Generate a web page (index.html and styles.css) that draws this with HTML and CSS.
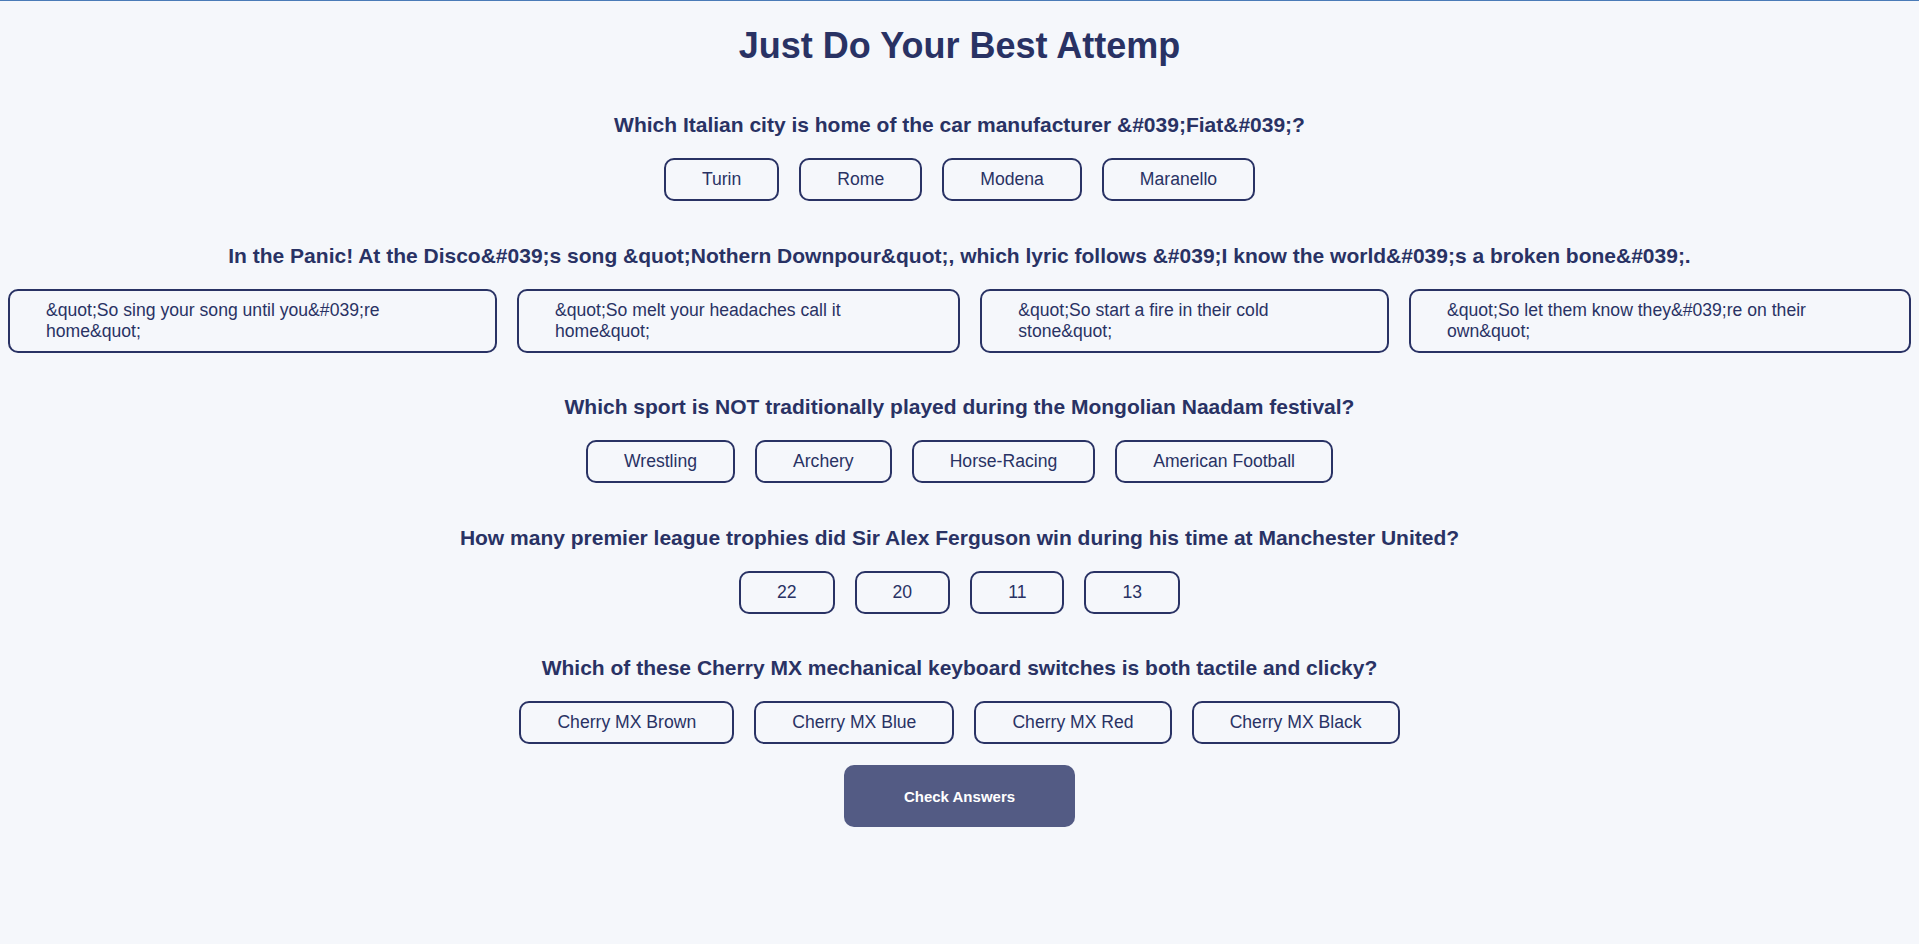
FILE: index.html
```html
<!DOCTYPE html>
<html lang="en">
<head>
<meta charset="utf-8">
<title>Quiz</title>
<link rel="stylesheet" href="styles.css">
</head>
<body>
<main class="quiz">
  <h1 class="quiz-title">Just Do Your Best Attemp</h1>

  <section class="question">
    <h2 class="question-text">Which Italian city is home of the car manufacturer &amp;#039;Fiat&amp;#039;?</h2>
    <div class="answers">
      <button class="answer">Turin</button>
      <button class="answer">Rome</button>
      <button class="answer">Modena</button>
      <button class="answer">Maranello</button>
    </div>
  </section>

  <section class="question">
    <h2 class="question-text">In the Panic! At the Disco&amp;#039;s song &amp;quot;Nothern Downpour&amp;quot;, which lyric follows &amp;#039;I know the world&amp;#039;s a broken bone&amp;#039;.</h2>
    <div class="answers">
      <button class="answer">&amp;quot;So sing your song until you&amp;#039;re home&amp;quot;</button>
      <button class="answer">&amp;quot;So melt your headaches call it home&amp;quot;</button>
      <button class="answer">&amp;quot;So start a fire in their cold stone&amp;quot;</button>
      <button class="answer">&amp;quot;So let them know they&amp;#039;re on their own&amp;quot;</button>
    </div>
  </section>

  <section class="question">
    <h2 class="question-text">Which sport is NOT traditionally played during the Mongolian Naadam festival?</h2>
    <div class="answers">
      <button class="answer">Wrestling</button>
      <button class="answer">Archery</button>
      <button class="answer">Horse-Racing</button>
      <button class="answer">American Football</button>
    </div>
  </section>

  <section class="question">
    <h2 class="question-text">How many premier league trophies did Sir Alex Ferguson win during his time at Manchester United?</h2>
    <div class="answers">
      <button class="answer">22</button>
      <button class="answer">20</button>
      <button class="answer">11</button>
      <button class="answer">13</button>
    </div>
  </section>

  <section class="question question-last">
    <h2 class="question-text">Which of these Cherry MX mechanical keyboard switches is both tactile and clicky?</h2>
    <div class="answers">
      <button class="answer">Cherry MX Brown</button>
      <button class="answer">Cherry MX Blue</button>
      <button class="answer">Cherry MX Red</button>
      <button class="answer">Cherry MX Black</button>
    </div>
  </section>

  <div class="actions">
    <button class="check-btn">Check Answers</button>
  </div>
</main>
</body>
</html>
```

FILE: styles.css
```css
html, body {
  margin: 0;
  padding: 0;
}

body {
  background: #f5f7fb;
  border-top: 1px solid #4a7bb7;
  min-height: 943px;
  box-sizing: border-box;
  font-family: "Liberation Sans", Arial, sans-serif;
  color: #293264;
}

.quiz {
  padding: 0 8px;
  display: flex;
  flex-direction: column;
  align-items: stretch;
}

.quiz-title {
  margin: 23.5px 0 46.5px;
  font-size: 36px;
  font-weight: 700;
  text-align: center;
  color: #293264;
}

.question {
  display: flex;
  flex-direction: column;
  margin-bottom: 42.5px;
}

.question-last {
  margin-bottom: 21px;
}

.question-text {
  margin: 0 0 21px;
  font-size: 21px;
  font-weight: 700;
  text-align: center;
  color: #293264;
}

.answers {
  display: flex;
  justify-content: center;
  gap: 20px;
}

.answer {
  flex: 0 1 auto;
  font-family: "Liberation Sans", Arial, sans-serif;
  font-size: 17.6px;
  color: #293264;
  background: transparent;
  border: 2px solid #293264;
  border-radius: 10px;
  padding: 9px 36px;
  text-align: left;
  line-height: normal;
  cursor: pointer;
}

.actions {
  display: flex;
  justify-content: center;
}

.check-btn {
  font-family: "Liberation Sans", Arial, sans-serif;
  font-size: 15px;
  font-weight: 700;
  color: #ffffff;
  background: #535b84;
  border: none;
  border-radius: 10px;
  width: 231px;
  height: 62px;
  cursor: pointer;
}
```
